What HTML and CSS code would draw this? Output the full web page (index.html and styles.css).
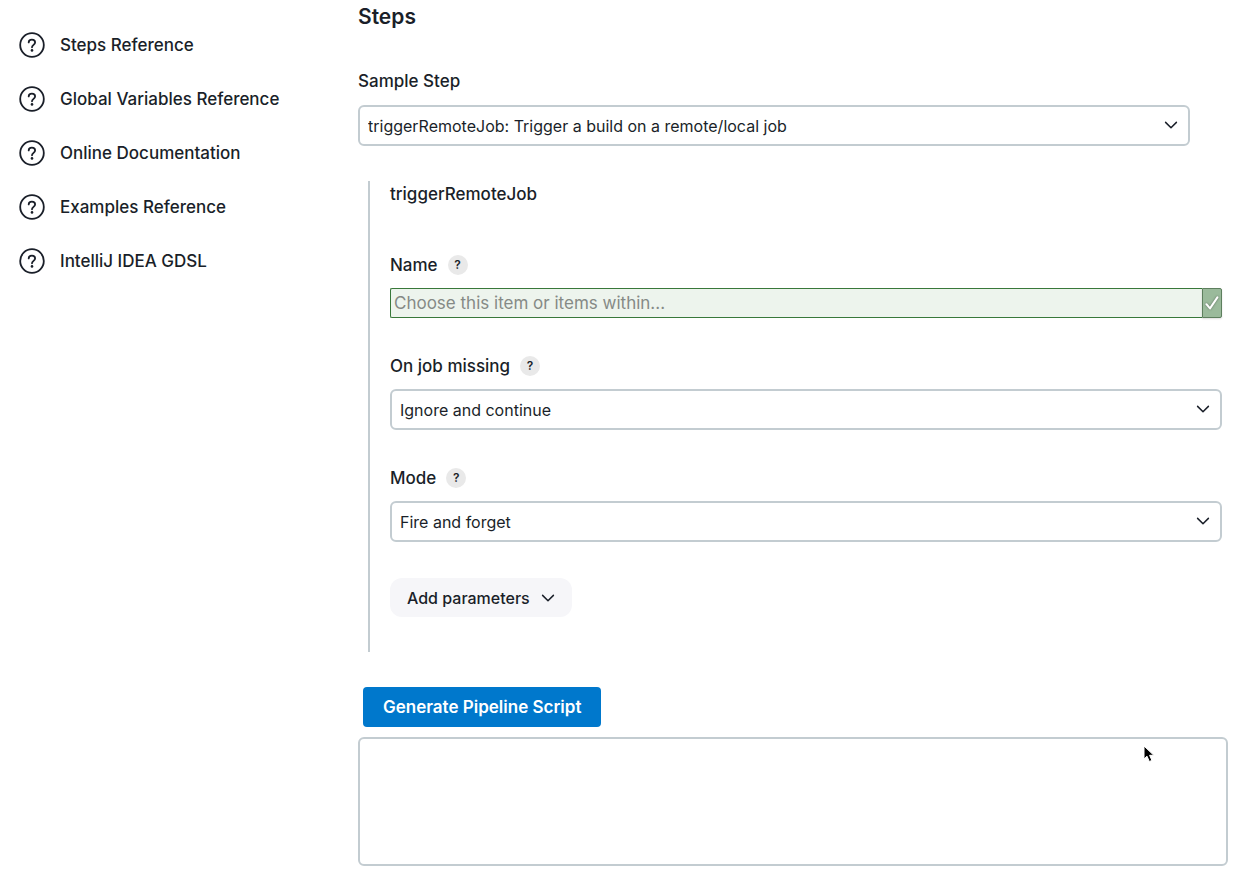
FILE: index.html
```html
<!DOCTYPE html>
<html lang="en">
<head>
<meta charset="utf-8">
<meta name="viewport" content="width=device-width, initial-scale=1">
<title>Pipeline Syntax: Snippet Generator</title>
<link rel="stylesheet" href="styles.css">
</head>
<body>
<svg class="defs" aria-hidden="true">
  <symbol id="help" viewBox="0 0 26 26">
    <circle cx="13" cy="13" r="11.8" fill="none" stroke="currentColor" stroke-width="1.8"/>
    <path d="M9.7 10.4c0-1.8 1.4-2.8 3.2-2.8s3.2 1.1 3.2 2.8c0 2.4-3.1 2.5-3.1 4.9" fill="none" stroke="currentColor" stroke-width="1.8" stroke-linecap="round" stroke-linejoin="round"/>
    <circle cx="13" cy="18.4" r="1.3" fill="currentColor"/>
  </symbol>
  <symbol id="chevron" viewBox="0 0 14 14">
    <path d="M1.6 4.4 7 9.8l5.4-5.4" fill="none" stroke="currentColor" stroke-width="1.5" stroke-linecap="round" stroke-linejoin="round"/>
  </symbol>
</svg>
<div class="page">
  <nav class="tasks" aria-label="Pipeline syntax">
    <a class="task" href="#steps"><svg class="task-icon"><use href="#help"/></svg>Steps Reference</a>
    <a class="task" href="#globals"><svg class="task-icon"><use href="#help"/></svg>Global Variables Reference</a>
    <a class="task" href="#docs"><svg class="task-icon"><use href="#help"/></svg>Online Documentation</a>
    <a class="task" href="#examples"><svg class="task-icon"><use href="#help"/></svg>Examples Reference</a>
    <a class="task" href="#gdsl"><svg class="task-icon"><use href="#help"/></svg>IntelliJ IDEA GDSL</a>
  </nav>
  <main class="main">
    <h2 class="heading">Steps</h2>
    <div class="sample">
      <label class="sample-label" for="sample">Sample Step</label>
      <div class="select-wrap">
        <select class="select" id="sample"><option>triggerRemoteJob: Trigger a build on a remote/local job</option></select>
        <svg class="select-arrow"><use href="#chevron"/></svg>
      </div>
    </div>
    <section class="step">
      <div class="step-title">triggerRemoteJob</div>
      <div class="field">
        <div class="label-row"><label for="name">Name</label><button class="help" type="button" aria-label="Help for Name">?</button></div>
        <div class="picker">
          <input class="picker-input" id="name" type="text" placeholder="Choose this item or items within...">
          <button class="picker-ok" type="button" aria-label="Choose">
            <svg class="check" viewBox="0 0 16 18"><path d="M2.4 10.2 6 14.4 13.4 3.4" fill="none" stroke="#fff" stroke-width="2" stroke-linecap="round" stroke-linejoin="round"/></svg>
          </button>
        </div>
      </div>
      <div class="field">
        <div class="label-row"><label for="missing">On job missing</label><button class="help" type="button" aria-label="Help for On job missing">?</button></div>
        <div class="select-wrap">
          <select class="select" id="missing"><option>Ignore and continue</option></select>
          <svg class="select-arrow"><use href="#chevron"/></svg>
        </div>
      </div>
      <div class="field">
        <div class="label-row"><label for="mode">Mode</label><button class="help" type="button" aria-label="Help for Mode">?</button></div>
        <div class="select-wrap">
          <select class="select" id="mode"><option>Fire and forget</option></select>
          <svg class="select-arrow"><use href="#chevron"/></svg>
        </div>
      </div>
      <button class="add" type="button">Add parameters<svg class="add-arrow"><use href="#chevron"/></svg></button>
    </section>
    <button class="generate" type="button">Generate Pipeline Script</button>
    <textarea class="output" aria-label="Generated script"></textarea>
  </main>
</div>
<svg class="cursor" viewBox="0 0 12 18" aria-hidden="true"><path d="M1 1v13l3-2.8 2.3 5.3 2.6-1.1-2.3-5.1h4.2z" fill="#000" stroke="#fff" stroke-width="1"/></svg>
</body>
</html>
```
FILE: styles.css
```css
* {
  box-sizing: border-box;
}

body {
  margin: 0;
  background: #fff;
  color: #1a1f29;
  font: 400 16px/24px Inter, "Liberation Sans", sans-serif;
}

button,
input,
select,
textarea {
  margin: 0;
  color: inherit;
  font: inherit;
}

.defs {
  display: none;
}

.page {
  display: grid;
  grid-template-columns: 340px minmax(0, 1fr);
  gap: 18px;
  padding-right: 18px;
}

.tasks {
  display: flex;
  flex-direction: column;
  gap: 28px;
  padding: 32px 0 0 19px;
}

.task {
  display: flex;
  align-items: center;
  gap: 15px;
  height: 26px;
  color: inherit;
  font-size: 17px;
  font-weight: 500;
  text-decoration: none;
}

.task-icon {
  width: 26px;
  height: 26px;
}

.main {
  display: flex;
  flex-direction: column;
  padding: 3px 0 13px;
}

.heading {
  margin: 0 0 38px;
  font-size: 21px;
  font-weight: 600;
  line-height: 28px;
}

.sample {
  margin: 0 38px 35px 0;
}

.sample-label {
  display: block;
  margin-bottom: 12px;
  font-size: 17px;
  font-weight: 500;
}

.label-row {
  display: flex;
  align-items: center;
  gap: 10px;
  margin-bottom: 11px;
  font-size: 17px;
  font-weight: 500;
}

.select-wrap {
  position: relative;
}

.select {
  display: block;
  width: 100%;
  height: 41px;
  padding: 0 36px 0 8px;
  border: 2px solid #c3ccd1;
  border-radius: 6px;
  background: #fff;
  appearance: none;
}

.select-arrow {
  position: absolute;
  top: 13px;
  right: 12px;
  width: 14px;
  height: 14px;
  pointer-events: none;
}

.step {
  margin: 0 6px 35px 10px;
  padding: 0 0 35px 20px;
  border-left: 2px solid #c3ccd1;
}

.step-title {
  margin-bottom: 46px;
  font-size: 17px;
  font-weight: 500;
  line-height: 26px;
}

.field {
  margin-bottom: 36px;
}

.help {
  width: 20px;
  height: 20px;
  padding: 0;
  border: 0;
  border-radius: 50%;
  background: #e9e9e9;
  font-size: 12px;
  font-weight: 600;
  line-height: 20px;
}

.picker {
  display: flex;
  height: 30px;
}

.picker-input {
  flex: 1;
  min-width: 0;
  padding: 0 3px;
  border: 1px solid #38783a;
  border-right: 0;
  border-radius: 2px 0 0 2px;
  background: #edf4ed;
  font-size: 17px;
}

.picker-input::placeholder {
  color: #858a86;
  opacity: 1;
}

.picker-ok {
  width: 20px;
  padding: 0 1px;
  border: 1px solid #5d7f5e;
  border-radius: 0 2px 2px 0;
  background: #9aba9b;
  box-shadow: 0 1px 2px #0002;
}

.check {
  display: block;
  width: 16px;
  height: 18px;
  filter: drop-shadow(0 0 1px #5c6c5d);
}

.add {
  display: flex;
  align-items: center;
  gap: 11px;
  height: 39px;
  padding: 0 17px;
  border: 0;
  border-radius: 12px;
  background: #f6f6f9;
  font-weight: 500;
}

.add-arrow {
  width: 14px;
  height: 14px;
}

.generate {
  align-self: flex-start;
  height: 40px;
  margin: 0 5px 10px;
  padding: 0 20px;
  border: 0;
  border-radius: 4px;
  background: #0078cc;
  color: #fff;
  font-size: 17px;
  font-weight: 600;
}

.output {
  display: block;
  width: 100%;
  height: 129px;
  border: 2px solid #c3ccd1;
  border-radius: 6px;
  background: #fff;
  resize: none;
}

.cursor {
  position: absolute;
  top: 745px;
  left: 1143px;
  width: 12px;
  height: 18px;
  pointer-events: none;
}
```
